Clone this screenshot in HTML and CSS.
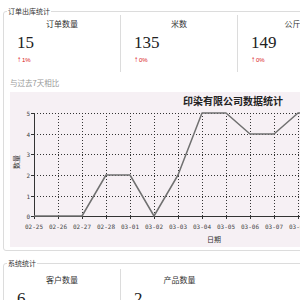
FILE: index.html
```html
<!DOCTYPE html>
<html lang="zh">
<head>
<meta charset="utf-8">
<link rel="stylesheet" href="styles.css">
</head>
<body>
<fieldset class="group group-first">
  <legend class="group-title">订单出库统计</legend>
  <div class="cards">
    <div class="card">
      <div class="card-title">订单数量</div>
      <div class="card-value">15</div>
      <div class="card-trend"><span class="arrow">&#8593;</span>1%</div>
    </div>
    <div class="card">
      <div class="card-title">米数</div>
      <div class="card-value">135</div>
      <div class="card-trend"><span class="arrow">&#8593;</span>0%</div>
    </div>
    <div class="card">
      <div class="card-title">公斤数</div>
      <div class="card-value">149</div>
      <div class="card-trend"><span class="arrow">&#8593;</span>0%</div>
    </div>
  </div>
  <div class="note">与过去7天相比</div>
  <div class="chart">
    <svg width="470" height="155" viewBox="0 0 470 155" xmlns="http://www.w3.org/2000/svg">
      <text class="c-title" x="223" y="13" text-anchor="middle">印染有限公司数据统计</text>
      <g stroke="#333" stroke-width="1" stroke-dasharray="1 2" fill="none">
        <line x1="24" y1="21.5" x2="470" y2="21.5"/>
        <line x1="24" y1="42.5" x2="470" y2="42.5"/>
        <line x1="24" y1="62.5" x2="470" y2="62.5"/>
        <line x1="24" y1="83.5" x2="470" y2="83.5"/>
        <line x1="24" y1="104.5" x2="470" y2="104.5"/>
        <line x1="48.5" y1="21" x2="48.5" y2="124"/>
        <line x1="72.5" y1="21" x2="72.5" y2="124"/>
        <line x1="96.5" y1="21" x2="96.5" y2="124"/>
        <line x1="120.5" y1="21" x2="120.5" y2="124"/>
        <line x1="144.5" y1="21" x2="144.5" y2="124"/>
        <line x1="168.5" y1="21" x2="168.5" y2="124"/>
        <line x1="192.5" y1="21" x2="192.5" y2="124"/>
        <line x1="216.5" y1="21" x2="216.5" y2="124"/>
        <line x1="240.5" y1="21" x2="240.5" y2="124"/>
        <line x1="264.5" y1="21" x2="264.5" y2="124"/>
        <line x1="288.5" y1="21" x2="288.5" y2="124"/>
        <line x1="312.5" y1="21" x2="312.5" y2="124"/>
        <line x1="336.5" y1="21" x2="336.5" y2="124"/>
      </g>
      <g stroke="#333" stroke-width="1" fill="none">
        <line x1="24.5" y1="21" x2="24.5" y2="124.5"/>
        <line x1="24" y1="124.5" x2="470" y2="124.5"/>
        <line x1="21" y1="21.5" x2="24" y2="21.5"/>
        <line x1="21" y1="42.5" x2="24" y2="42.5"/>
        <line x1="21" y1="62.5" x2="24" y2="62.5"/>
        <line x1="21" y1="83.5" x2="24" y2="83.5"/>
        <line x1="21" y1="104.5" x2="24" y2="104.5"/>
        <line x1="21" y1="124.5" x2="24" y2="124.5"/>
        <line x1="24.5" y1="124" x2="24.5" y2="127"/>
        <line x1="48.5" y1="124" x2="48.5" y2="127"/>
        <line x1="72.5" y1="124" x2="72.5" y2="127"/>
        <line x1="96.5" y1="124" x2="96.5" y2="127"/>
        <line x1="120.5" y1="124" x2="120.5" y2="127"/>
        <line x1="144.5" y1="124" x2="144.5" y2="127"/>
        <line x1="168.5" y1="124" x2="168.5" y2="127"/>
        <line x1="192.5" y1="124" x2="192.5" y2="127"/>
        <line x1="216.5" y1="124" x2="216.5" y2="127"/>
        <line x1="240.5" y1="124" x2="240.5" y2="127"/>
        <line x1="264.5" y1="124" x2="264.5" y2="127"/>
        <line x1="288.5" y1="124" x2="288.5" y2="127"/>
      </g>
      <polyline points="24,124 48,124 72,124 96,83 120,83 144,124 168,83 192,21 216,21 240,42 264,42 288,21 312,21 336,21" fill="none" stroke="#707070" stroke-width="1.5" stroke-linejoin="round"/>
      <g class="c-ylab" text-anchor="end">
        <text x="20" y="24">5</text>
        <text x="20" y="45">4</text>
        <text x="20" y="65">3</text>
        <text x="20" y="86">2</text>
        <text x="20" y="107">1</text>
        <text x="20" y="127">0</text>
      </g>
      <g class="c-xlab" text-anchor="middle">
        <text x="24" y="137">02-25</text>
        <text x="48" y="137">02-26</text>
        <text x="72" y="137">02-27</text>
        <text x="96" y="137">02-28</text>
        <text x="120" y="137">03-01</text>
        <text x="144" y="137">03-02</text>
        <text x="168" y="137">03-03</text>
        <text x="192" y="137">03-04</text>
        <text x="216" y="137">03-05</text>
        <text x="240" y="137">03-06</text>
        <text x="264" y="137">03-07</text>
        <text x="288" y="137">03-08</text>
      </g>
      <text class="c-axis" x="204" y="150" text-anchor="middle">日期</text>
      <text class="c-axis" x="0" y="0" text-anchor="middle" transform="translate(9 70) rotate(-90)">数量</text>
    </svg>
  </div>
</fieldset>
<fieldset class="group group-second">
  <legend class="group-title">系统统计</legend>
  <div class="cards">
    <div class="card">
      <div class="card-title">客户数量</div>
      <div class="card-value">6</div>
    </div>
    <div class="card">
      <div class="card-title">产品数量</div>
      <div class="card-value">2</div>
    </div>
  </div>
</fieldset>
</body>
</html>
```
FILE: styles.css
```css
html, body {
  margin: 0;
  padding: 0;
  overflow: hidden;
  background: #fff;
}
body {
  font-family: "Noto Sans CJK SC", "Liberation Sans", sans-serif;
  color: #333;
  width: 480px;
}
.group {
  width: 470px;
  margin: 7px 0 0 3px;
  padding: 0 0 3px 0;
  border: 1px solid #dcdcdc;
  border-radius: 3px;
  box-sizing: border-box;
  min-width: 0;
}
.group-second {
  margin-top: 8px;
  padding-top: 2px;
}
.group-second .card-title {
  padding-top: 6px;
}
.group-title {
  font-size: 7px;
  line-height: 8px;
  margin-left: 3px;
  padding: 0 1px;
  color: #333;
}
.cards {
  display: flex;
}
.card {
  width: 117px;
  height: 57px;
  border-right: 1px solid #dcdcdc;
  box-sizing: border-box;
}
.card:last-child {
  border-right: 0;
}
.card-title {
  font-size: 8px;
  line-height: 10px;
  padding-top: 4px;
  text-align: center;
}
.card-value {
  font-family: "Liberation Serif", serif;
  font-size: 17px;
  line-height: 20px;
  margin-top: 4px;
  padding-left: 13px;
  color: #222;
}
.card-trend {
  font-family: "Liberation Sans", sans-serif;
  font-size: 6px;
  line-height: 8px;
  margin-top: 3px;
  padding-left: 13px;
  color: #d9151b;
}
.arrow {
  font-size: 8px;
  font-weight: bold;
  margin-right: 1px;
}
.note {
  font-size: 7.5px;
  line-height: 12px;
  margin: 5px 0 0 6px;
  color: #999;
}
.chart {
  margin: 3px 0 0 6px;
  height: 155px;
  background: #f6f0f4;
}
.chart svg {
  display: block;
}
.c-title {
  font-family: "Noto Sans CJK SC", sans-serif;
  font-size: 10px;
  font-weight: bold;
  fill: #222;
}
.c-ylab, .c-xlab {
  font-family: "DejaVu Sans Mono", monospace;
  font-size: 6px;
  fill: #444;
}
.c-axis {
  font-family: "Noto Sans CJK SC", sans-serif;
  font-size: 7px;
  fill: #333;
}
```
